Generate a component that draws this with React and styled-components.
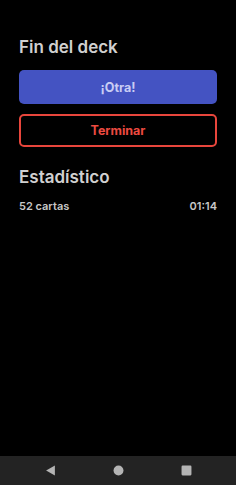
import styled, { createGlobalStyle } from "styled-components";

const Global = createGlobalStyle`
  html, body { margin: 0; padding: 0; background: #000; }
  * { box-sizing: border-box; }
`;

const Screen = styled.div`
  height: 100vh;
  display: flex;
  flex-direction: column;
  background: #000;
  font-family: Inter, "Noto Sans", sans-serif;
`;

const Content = styled.div`
  flex: 1;
  padding: 37px 19px 0 19px;
  display: flex;
  flex-direction: column;
`;

const Heading = styled.h1`
  margin: 0;
  font-size: 17px;
  font-weight: 600;
  color: #d0d0d0;
  line-height: 20px;
  margin-top: ${(p) => p.$top || 0}px;
`;

const Button = styled.button`
  height: ${(p) => (p.$outline ? 33 : 34)}px;
  width: 100%;
  border-radius: 5px;
  font-family: Inter, "Noto Sans", sans-serif;
  font-weight: 700;
  font-size: 12.5px;
  border: ${(p) => (p.$outline ? "2px solid #e8463c" : "none")};
  background: ${(p) => (p.$outline ? "transparent" : "#4453c2")};
  color: ${(p) => (p.$outline ? "#ec4a40" : "#c9cdf4")};
  margin-top: ${(p) => p.$top}px;
`;

const StatRow = styled.div`
  display: flex;
  justify-content: space-between;
  margin-top: 12px;
  font-size: 11px;
  font-weight: 600;
  color: #c8c8c8;
`;

const NavBar = styled.div`
  height: 29px;
  background: #232323;
  display: flex;
  align-items: center;
  justify-content: center;
  gap: 57px;
`;

const NavIcon = styled.svg`
  width: 11px;
  height: 11px;
  fill: #b4b4b4;
`;

export default function App() {
  return (
    <Screen>
      <Global />
      <Content>
        <Heading>Fin del deck</Heading>
        <Button $top={13}>¡Otra!</Button>
        <Button $outline $top={10}>Terminar</Button>
        <Heading $top={20}>Estadístico</Heading>
        <StatRow>
          <span>52 cartas</span>
          <span>01:14</span>
        </StatRow>
      </Content>
      <NavBar>
        <NavIcon viewBox="0 0 10 10"><path d="M1 5 L9 0.5 L9 9.5 Z" /></NavIcon>
        <NavIcon viewBox="0 0 10 10"><circle cx="5" cy="5" r="4.5" /></NavIcon>
        <NavIcon viewBox="0 0 10 10"><rect x="0.5" y="0.5" width="9" height="9" rx="1" /></NavIcon>
      </NavBar>
    </Screen>
  );
}
